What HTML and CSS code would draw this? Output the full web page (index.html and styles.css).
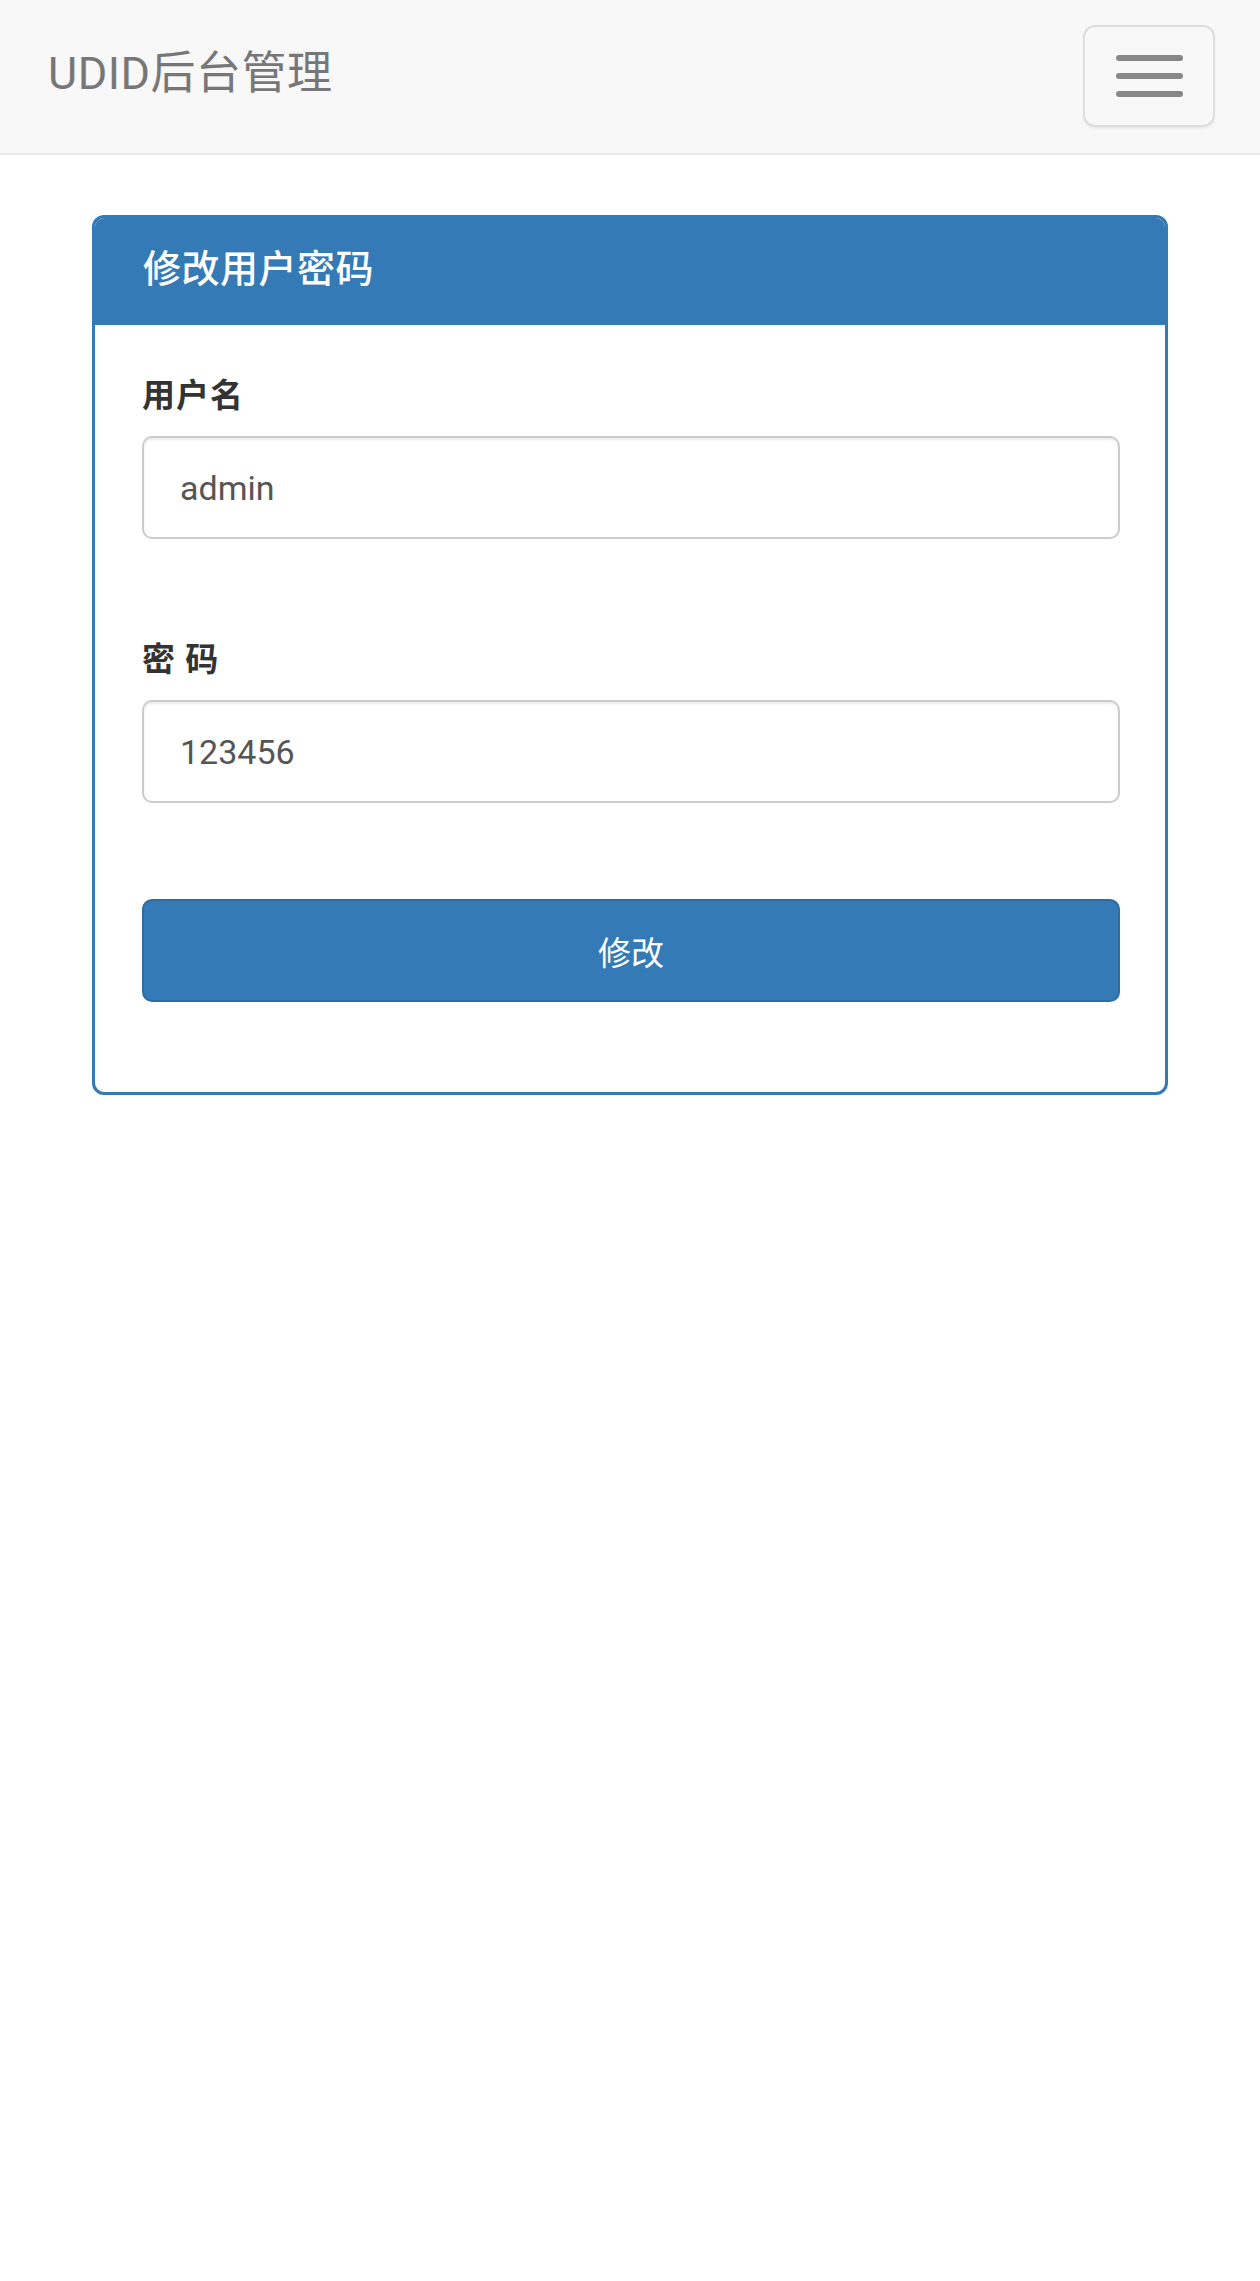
FILE: index.html
```html
<!DOCTYPE html>
<html lang="zh-CN">
<head>
<meta charset="utf-8">
<title>UDID后台管理</title>
<link rel="stylesheet" href="styles.css">
</head>
<body>
<nav class="navbar">
  <a class="brand" href="#">UDID后台管理</a>
  <button class="toggle" type="button" aria-label="菜单">
    <span class="bar"></span>
    <span class="bar"></span>
    <span class="bar"></span>
  </button>
</nav>
<main class="container">
  <section class="panel">
    <header class="panel-heading">修改用户密码</header>
    <form class="panel-body">
      <div class="form-group">
        <label class="label" for="user">用户名</label>
        <input class="input" id="user" type="text" value="admin">
      </div>
      <div class="form-group">
        <label class="label" for="pass">密 码</label>
        <input class="input" id="pass" type="text" value="123456">
      </div>
      <button class="submit" type="button">修改</button>
    </form>
  </section>
</main>
</body>
</html>
```

FILE: styles.css
```css
* { box-sizing: border-box; }
html, body {
  margin: 0;
  padding: 0;
  background: #fff;
  font-family: Roboto, "Noto Sans CJK SC", sans-serif;
}
.navbar {
  height: 155px;
  background: #f8f8f8;
  border-bottom: 2px solid #e7e7e7;
  display: flex;
  align-items: center;
  justify-content: space-between;
  padding: 0 45px 0 48px;
}
.brand {
  color: #777;
  font-size: 45px;
  line-height: 60px;
  text-decoration: none;
  margin-bottom: 6px;
  letter-spacing: 0.5px;
}
.toggle {
  width: 132px;
  height: 102px;
  margin-bottom: 2px;
  background: transparent;
  border: 2px solid #ddd;
  border-radius: 12px;
  box-shadow: 0 2px 2px rgba(0,0,0,0.05);
  display: flex;
  flex-direction: column;
  align-items: center;
  justify-content: center;
  gap: 12px;
  padding: 0;
}
.bar {
  display: block;
  width: 67px;
  height: 6px;
  border-radius: 3px;
  background: #888;
}
.container {
  padding: 60px 92px 0 92px;
}
.panel {
  border: 3px solid #337ab7;
  border-radius: 12px;
  overflow: hidden;
  background: #fff;
}
.panel-heading {
  background: #337ab7;
  color: #fff;
  font-size: 38px;
  font-weight: 500;
  letter-spacing: 0.5px;
  line-height: 52px;
  height: 107px;
  padding: 25px 0 0 48px;
}
.panel-body {
  display: flex;
  flex-direction: column;
  padding: 47px 45px 90px 47px;
}
.form-group {
  display: flex;
  flex-direction: column;
  margin-bottom: 97px;
}
.form-group:nth-child(2) { margin-bottom: 96px; }
.label {
  color: #333;
  font-weight: bold;
  font-size: 33px;
  line-height: 47px;
  margin-bottom: 17px;
  letter-spacing: 1px;
}
.input {
  height: 103px;
  border: 2px solid #ccc;
  border-radius: 10px;
  box-shadow: inset 0 2px 2px rgba(0,0,0,0.075);
  padding: 0 36px;
  font-family: Roboto, "Noto Sans CJK SC", sans-serif;
  font-size: 34px;
  color: #555;
  background: #fff;
}
.submit {
  height: 103px;
  background: #337ab7;
  border: 2px solid #2e6da4;
  border-radius: 10px;
  color: #fff;
  font-family: Roboto, "Noto Sans CJK SC", sans-serif;
  font-size: 33px;
  padding: 0;
}
```
